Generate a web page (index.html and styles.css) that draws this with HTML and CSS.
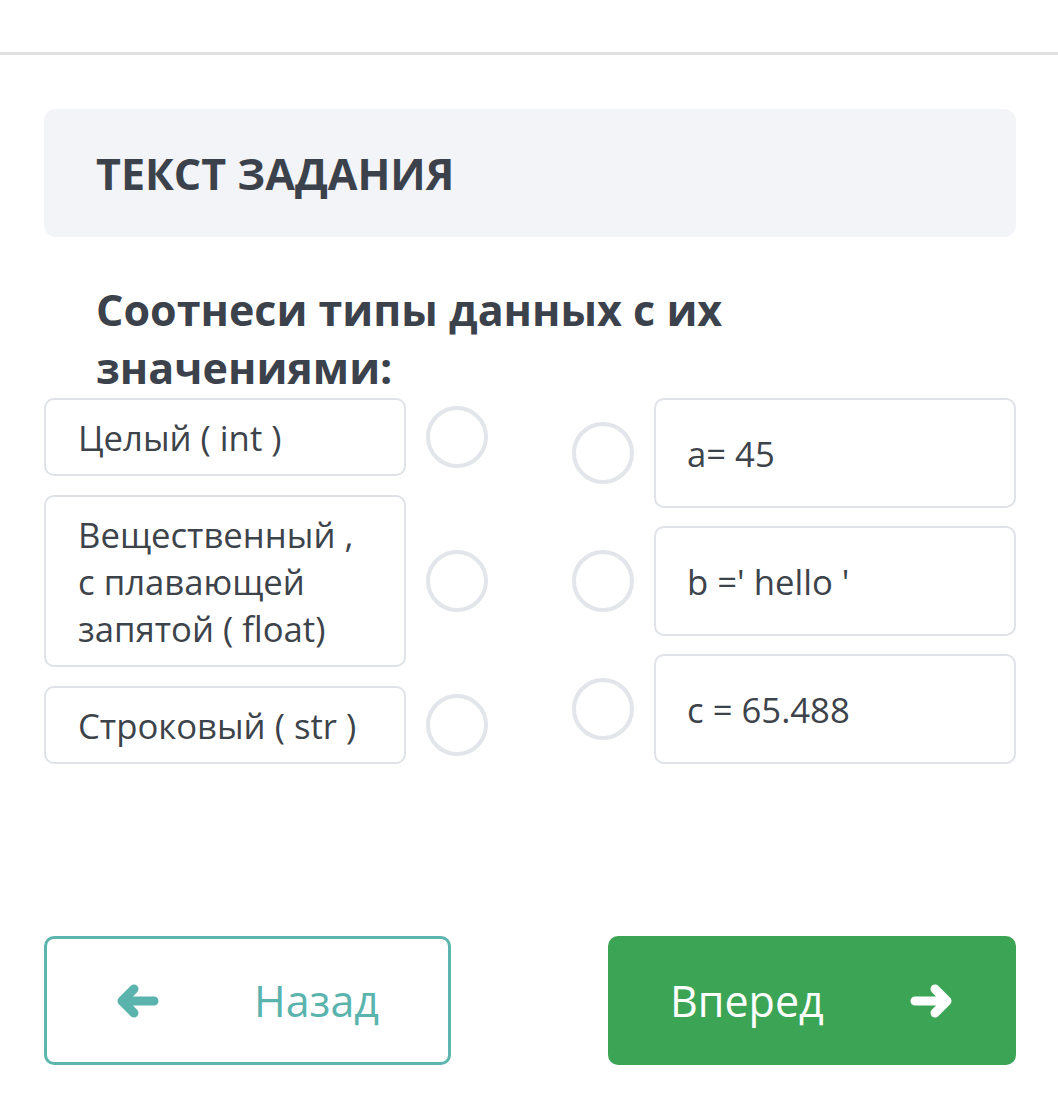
FILE: index.html
```html
<!DOCTYPE html>
<html lang="ru">
<head>
<meta charset="utf-8">
<title>Задание</title>
<link rel="stylesheet" href="styles.css">
</head>
<body>
<div class="topbar"></div>
<main class="page">
  <section class="task-head">
    <h1>ТЕКСТ ЗАДАНИЯ</h1>
  </section>
  <p class="question">Соотнеси типы данных с их значениями:</p>
  <div class="match">
    <div class="col col-left">
      <div class="item">
        <div class="card">Целый ( int )</div>
        <span class="dot"></span>
      </div>
      <div class="item">
        <div class="card">Вещественный ,<br>с плавающей<br>запятой ( float)</div>
        <span class="dot"></span>
      </div>
      <div class="item">
        <div class="card">Строковый ( str )</div>
        <span class="dot"></span>
      </div>
    </div>
    <div class="col col-right">
      <div class="item">
        <span class="dot"></span>
        <div class="card tall">a= 45</div>
      </div>
      <div class="item">
        <span class="dot"></span>
        <div class="card tall">b =' hello '</div>
      </div>
      <div class="item">
        <span class="dot"></span>
        <div class="card tall">c = 65.488</div>
      </div>
    </div>
  </div>
  <div class="nav">
    <button class="btn btn-back">
      <svg class="arrow" viewBox="0 0 44 36" width="44" height="36"><path d="M39 18H7M19 6L7 18L19 30" fill="none" stroke="currentColor" stroke-width="9" stroke-linecap="round" stroke-linejoin="round"/></svg>
      <span>Назад</span>
    </button>
    <button class="btn btn-next">
      <span>Вперед</span>
      <svg class="arrow" viewBox="0 0 44 36" width="44" height="36"><path d="M5 18H37M25 6L37 18L25 30" fill="none" stroke="currentColor" stroke-width="9" stroke-linecap="round" stroke-linejoin="round"/></svg>
    </button>
  </div>
</main>
</body>
</html>
```
FILE: styles.css
```css
* { box-sizing: border-box; }
html, body { margin: 0; padding: 0; background: #fff; }
body {
  font-family: "Open Sans", "Noto Sans", sans-serif;
  color: #3c424a;
}
.topbar {
  height: 55px;
  border-bottom: 3px solid #e0e0e0;
}
.page {
  padding: 54px 42px 0 44px;
}
.task-head {
  background: #f3f4f7;
  border-radius: 12px;
  height: 128px;
  display: flex;
  align-items: center;
  padding-left: 52px;
}
.task-head h1 {
  margin: 0;
  font-size: 43px;
  font-weight: 700;
  color: #3b424b;
  letter-spacing: 0;
}
.question {
  margin: 44px 0 0 0;
  padding: 0 200px 0 52px;
  font-size: 43px;
  font-weight: 700;
  line-height: 58px;
  color: #3b424b;
}
.match {
  display: flex;
  justify-content: space-between;
  margin-top: 1px;
}
.col {
  display: flex;
  flex-direction: column;
  gap: 18px;
}
.col-left { gap: 19px; }
.item {
  display: flex;
  align-items: center;
  gap: 20px;
}
.card {
  width: 362px;
  border: 2px solid #dfe2e6;
  border-radius: 10px;
  padding: 13.5px 16px 13.5px 32px;
  font-size: 34.7px;
  line-height: 47px;
  color: #3d434a;
  background: #fff;
  white-space: nowrap;
}
.col-left .item:first-child .card,
.col-left .item:last-child .card { padding-top: 14px; padding-bottom: 13px; }
.card.tall {
  min-height: 110px;
  display: flex;
  align-items: center;
  padding-left: 31px;
}
.col-right { gap: 18px; }
.dot {
  width: 62px;
  height: 62px;
  border-radius: 50%;
  border: 4px solid #e2e5e9;
  flex: none;
}
.nav {
  display: flex;
  justify-content: space-between;
  margin-top: 172px;
}
.btn {
  height: 129px;
  border-radius: 10px;
  font-family: "Open Sans", "Noto Sans", sans-serif;
  font-size: 43px;
  display: flex;
  align-items: center;
  cursor: pointer;
}
.btn-back {
  width: 407px;
  background: #fff;
  border: 3px solid #5cb5ae;
  color: #5ab4ad;
  padding: 0 0 0 68px;
  gap: 95px;
}
.btn-next {
  width: 408px;
  background: #3ca555;
  border: none;
  color: #fff;
  padding: 0 0 0 62px;
  gap: 86px;
}
.arrow { flex: none; }
```
